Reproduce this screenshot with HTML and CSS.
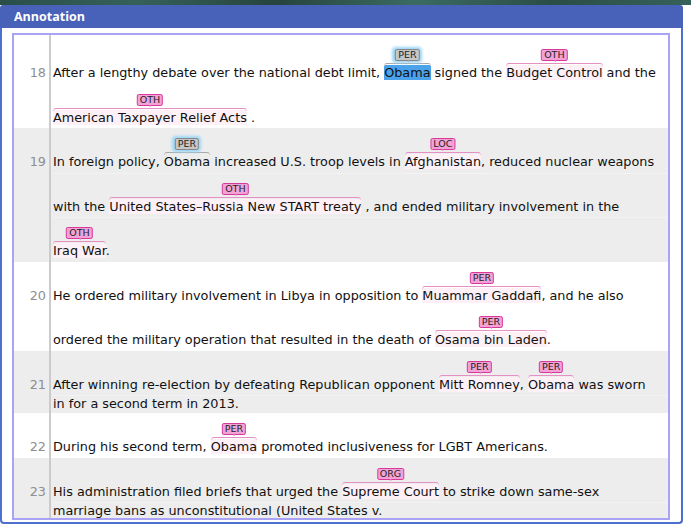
FILE: index.html
```html
<!DOCTYPE html>
<html>
<head>
<meta charset="utf-8">
<link rel="stylesheet" href="styles.css">
</head>
<body>
<div class="strip"></div>
<div class="panel">
  <div class="header">Annotation</div>
  <div class="body">
    <div class="doc">
      <div class="row first">
        <div class="num">18</div>
        <div class="lines">
          <div class="line ann">After a lengthy debate over the national debt limit, <span class="ent sel"><span class="lab gry">PER</span>Obama</span> signed the <span class="ent"><span class="lab">OTH</span>Budget Control</span> and the</div>
          <div class="line ann"><span class="ent"><span class="lab">OTH</span>American Taxpayer Relief Acts</span> .</div>
        </div>
      </div>
      <div class="row alt">
        <div class="num">19</div>
        <div class="lines">
          <div class="line ann">In foreign policy, <span class="ent grey"><span class="lab gry">PER</span>Obama</span> increased U.S. troop levels in <span class="ent"><span class="lab">LOC</span>Afghanistan</span>, reduced nuclear weapons</div>
          <div class="line ann">with the <span class="ent"><span class="lab">OTH</span>United States–Russia New START treaty</span> , and ended military involvement in the</div>
          <div class="line ann"><span class="ent"><span class="lab">OTH</span>Iraq War</span>.</div>
        </div>
      </div>
      <div class="row">
        <div class="num">20</div>
        <div class="lines">
          <div class="line ann">He ordered military involvement in Libya in opposition to <span class="ent"><span class="lab">PER</span>Muammar Gaddafi</span>, and he also</div>
          <div class="line ann">ordered the military operation that resulted in the death of <span class="ent"><span class="lab">PER</span>Osama bin Laden</span>.</div>
        </div>
      </div>
      <div class="row alt">
        <div class="num">21</div>
        <div class="lines">
          <div class="line ann">After winning re-election by defeating Republican opponent <span class="ent"><span class="lab">PER</span>Mitt Romney</span>, <span class="ent"><span class="lab">PER</span>Obama</span> was sworn</div>
          <div class="line">in for a second term in 2013.</div>
        </div>
      </div>
      <div class="row">
        <div class="num">22</div>
        <div class="lines">
          <div class="line ann">During his second term, <span class="ent"><span class="lab">PER</span>Obama</span> promoted inclusiveness for LGBT Americans.</div>
        </div>
      </div>
      <div class="row alt">
        <div class="num">23</div>
        <div class="lines">
          <div class="line ann">His administration filed briefs that urged the <span class="ent"><span class="lab">ORG</span>Supreme Court</span> to strike down same-sex</div>
          <div class="line">marriage bans as unconstitutional (United States v.</div>
        </div>
      </div>
    </div>
  </div>
</div>
</body>
</html>
```
FILE: styles.css
```css
html, body {
  margin: 0;
  padding: 0;
  background: #ffffff;
}

body {
  width: 691px;
  height: 532px;
  overflow: hidden;
  font-family: "DejaVu Sans", Verdana, sans-serif;
}

.strip {
  height: 5px;
  background: linear-gradient(90deg, #2a4f49 0%, #35615a 20%, #27443e 40%, #3a6b62 60%, #2b4d47 80%, #35625a 100%);
}

.panel {
  width: 683px;
}

.header {
  height: 23px;
  line-height: 23px;
  background: #4862b9;
  color: #ffffff;
  font-family: "Open Sans", "DejaVu Sans", sans-serif;
  font-weight: bold;
  font-size: 12.5px;
  padding-left: 14px;
  border-radius: 3px 3px 0 0;
}

.body {
  border: 2px solid #4d6fd0;
  border-top: 0;
  border-radius: 0 0 4px 4px;
  padding: 5px 11px 2px 10px;
}

.doc {
  border: 2px solid #aaa2f4;
  height: 483px;
  overflow: hidden;
  background: #ffffff;
  font-size: 12.8px;
  color: #111111;
}

.row {
  display: flex;
}

.row.alt {
  background: #ededed;
}

.num {
  width: 32px;
  padding-right: 3px;
  border-right: 2px solid #cbcbcb;
  text-align: right;
  color: #8e8e8e;
  padding-top: 25px;
  line-height: 18px;
  flex: none;
}

.row.first .num {
  padding-top: 29px;
}

.row.first .lines {
  padding-top: 4px;
}

.lines {
  flex: 1;
  padding-left: 2px;
}

.line {
  white-space: nowrap;
  height: 18px;
  line-height: 18px;
}

.line.ann {
  padding-top: 25px;
  padding-bottom: 1.5px;
}

.row.alt .line + .line {
  box-shadow: inset 0 1px 0 #f3f3f3;
}

.ent {
  position: relative;
  background: #fdf0f6;
}

.ent::before {
  content: "";
  position: absolute;
  left: 0;
  right: 0;
  bottom: calc(100% - 1px);
  height: 2px;
  border-top: 1px solid #e68fc2;
  border-left: 1px solid #f3c3df;
  border-right: 1px solid #f3c3df;
  border-radius: 4px 4px 0 0;
}

.ent.sel {
  background: #4aa3ea;
}

.ent.grey {
  background: transparent;
}

.ent.sel::before,
.ent.grey::before {
  border-top-color: #aaaaaa;
  border-left-color: #cfcfcf;
  border-right-color: #cfcfcf;
}

.lab {
  position: absolute;
  left: 50%;
  bottom: calc(100% + 4px);
  transform: translateX(-50%);
  white-space: nowrap;
  font-size: 9.5px;
  line-height: 10px;
  padding: 0 2px;
  border: 1px solid #d8389a;
  border-radius: 2px;
  background: #f4a2d6;
  color: #222222;
}

.lab::after {
  content: "";
  position: absolute;
  left: 50%;
  top: 100%;
  width: 1px;
  height: 2px;
  background: #e68fc2;
}

.lab.gry {
  background: #c6c6c6;
  border-color: #858585;
  box-shadow: 0 0 3px 2px #9bd6f6;
}

.lab.gry::after {
  background: #aaaaaa;
}
```
